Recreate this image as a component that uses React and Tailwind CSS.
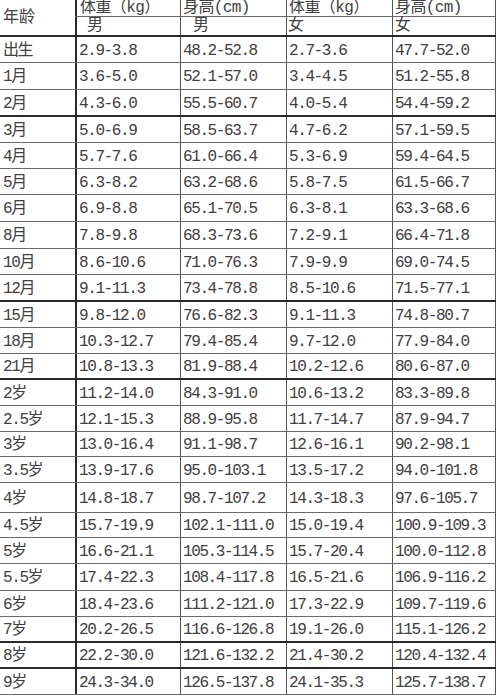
const ROWS = [
  ['出生', '2.9-3.8', '48.2-52.8', '2.7-3.6', '47.7-52.0', 26, false],
  ['1月', '3.6-5.0', '52.1-57.0', '3.4-4.5', '51.2-55.8', 27, false],
  ['2月', '4.3-6.0', '55.5-60.7', '4.0-5.4', '54.4-59.2', 27, true],
  ['3月', '5.0-6.9', '58.5-63.7', '4.7-6.2', '57.1-59.5', 26, false],
  ['4月', '5.7-7.6', '61.0-66.4', '5.3-6.9', '59.4-64.5', 26, false],
  ['5月', '6.3-8.2', '63.2-68.6', '5.8-7.5', '61.5-66.7', 26, false],
  ['6月', '6.9-8.8', '65.1-70.5', '6.3-8.1', '63.3-68.6', 27, false],
  ['8月', '7.8-9.8', '68.3-73.6', '7.2-9.1', '66.4-71.8', 27, false],
  ['10月', '8.6-10.6', '71.0-76.3', '7.9-9.9', '69.0-74.5', 26, false],
  ['12月', '9.1-11.3', '73.4-78.8', '8.5-10.6', '71.5-77.1', 27, true],
  ['15月', '9.8-12.0', '76.6-82.3', '9.1-11.3', '74.8-80.7', 26, false],
  ['18月', '10.3-12.7', '79.4-85.4', '9.7-12.0', '77.9-84.0', 26, false],
  ['21月', '10.8-13.3', '81.9-88.4', '10.2-12.6', '80.6-87.0', 26, true],
  ['2岁', '11.2-14.0', '84.3-91.0', '10.6-13.2', '83.3-89.8', 26, false],
  ['2.5岁', '12.1-15.3', '88.9-95.8', '11.7-14.7', '87.9-94.7', 26, false],
  ['3岁', '13.0-16.4', '91.1-98.7', '12.6-16.1', '90.2-98.1', 25, false],
  ['3.5岁', '13.9-17.6', '95.0-103.1', '13.5-17.2', '94.0-101.8', 26, false],
  ['4岁', '14.8-18.7', '98.7-107.2', '14.3-18.3', '97.6-105.7', 30, false],
  ['4.5岁', '15.7-19.9', '102.1-111.0', '15.0-19.4', '100.9-109.3', 25, false],
  ['5岁', '16.6-21.1', '105.3-114.5', '15.7-20.4', '100.0-112.8', 26, false],
  ['5.5岁', '17.4-22.3', '108.4-117.8', '16.5-21.6', '106.9-116.2', 27, false],
  ['6岁', '18.4-23.6', '111.2-121.0', '17.3-22.9', '109.7-119.6', 26, false],
  ['7岁', '20.2-26.5', '116.6-126.8', '19.1-26.0', '115.1-126.2', 26, true],
  ['8岁', '22.2-30.0', '121.6-132.2', '21.4-30.2', '120.4-132.4', 26, true],
  ['9岁', '24.3-34.0', '126.5-137.8', '24.1-35.3', '125.7-138.7', 26, false],
];

const font = { fontFamily: '"Liberation Mono", "Noto Sans CJK SC", monospace' };

function Row({ r }) {
  const [age, wm, hm, wf, hf, h, thick] = r;
  const hc = h === 25 ? 'h-[25px]' : h === 26 ? 'h-[26px]' : h === 27 ? 'h-[27px]' : 'h-[30px]';
  const bc = thick ? 'border-b-2 border-[#2a2a2a]' : 'border-b border-[#6a6a6a]';
  return (
    <div className={`flex w-[496px] ${hc} ${bc}`}>
      <div className="w-[75px] flex items-center pl-[3px] pt-[2px]">{age}</div>
      <div className="w-[105px] flex items-center pl-[2px] pt-[2px] border-l-2 border-[#2a2a2a]">{wm}</div>
      <div className="w-[106px] flex items-center pl-[2px] pt-[2px] border-l border-[#555]">{hm}</div>
      <div className="w-[106px] flex items-center pl-[2px] pt-[2px] border-l border-[#555]">{wf}</div>
      <div className="w-[104px] flex items-center pl-[2px] pt-[2px] border-x border-[#555]">{hf}</div>
    </div>
  );
}

export default function App() {
  return (
    <div className="w-[499px] h-[696px] overflow-hidden bg-white text-[#404040] text-[16px] tracking-[-1.4px] leading-none" style={font}>
      <div className="flex w-[496px] h-[37px] border-b-2 border-[#2a2a2a]">
        <div className="w-[75px] flex items-center pl-[3px] text-[16px] tracking-normal">年龄</div>
        <div className="flex flex-col w-[421px]">
          <div className="flex h-[17px] border-b border-[#6a6a6a]">
            <div className="w-[105px] pl-[3px] border-l-2 border-[#2a2a2a] tracking-[-0.6px]">体重（kg）</div>
            <div className="w-[106px] pl-[2px] border-l border-[#555] tracking-[-0.6px]">身高(cm)</div>
            <div className="w-[106px] pl-[2px] border-l border-[#555] tracking-[-0.6px]">体重（kg）</div>
            <div className="w-[104px] pl-[2px] border-x border-[#555] tracking-[-0.6px]">身高(cm)</div>
          </div>
          <div className="flex flex-1">
            <div className="w-[105px] flex items-center pl-[10px] border-l-2 border-[#2a2a2a]">男</div>
            <div className="w-[106px] flex items-center pl-[12px] border-l border-[#555]">男</div>
            <div className="w-[106px] flex items-center pl-[1px] border-l border-[#555]">女</div>
            <div className="w-[104px] flex items-center pl-[2px] border-x border-[#555]">女</div>
          </div>
        </div>
      </div>
      {ROWS.map(r => <Row key={r[0]} r={r} />)}
    </div>
  );
}
